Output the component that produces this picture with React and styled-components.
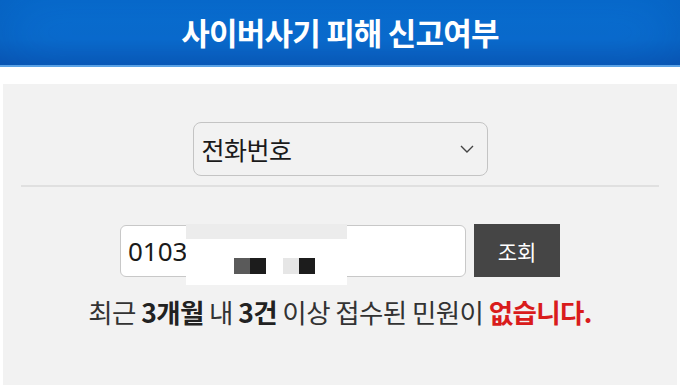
import React from 'react';
import styled, { createGlobalStyle } from 'styled-components';

const GlobalStyle = createGlobalStyle`
    body {
        margin: 0;
        background: #ffffff;
        font-family: "Noto Sans CJK KR", "Noto Sans", sans-serif;
    }
`;

export default function App() {
    return (
        <>
            <GlobalStyle />
            <Page>
                <Header>
                    <Title>사이버사기 피해 신고여부</Title>
                </Header>
                <Panel>
                    <SelectRow>
                        <Select>
                            <span>전화번호</span>
                            <svg width="16" height="10" viewBox="0 0 16 10">
                                <path d="M2 2 L8 8 L14 2" fill="none" stroke="#444" strokeWidth="1.4" />
                            </svg>
                        </Select>
                    </SelectRow>
                    <Divider />
                    <SearchRow>
                        <InputBox>
                            <InputText>0103</InputText>
                            <Censor>
                                <CensorBand />
                                <Pixels>
                                    <Pixel $c="#5a5a5a" />
                                    <Pixel $c="#1c1c1c" />
                                    <PixelGap />
                                    <Pixel $c="#e6e6e6" />
                                    <Pixel $c="#1c1c1c" />
                                </Pixels>
                            </Censor>
                        </InputBox>
                        <Button>조회</Button>
                    </SearchRow>
                    <Message>
                        최근 <b>3개월</b> 내 <b>3건</b> 이상 접수된 민원이 <Red>없습니다.</Red>
                    </Message>
                </Panel>
            </Page>
        </>
    );
}

const Page = styled.div`
    width: 680px;
    height: 385px;
    overflow: hidden;
    display: flex;
    flex-direction: column;
`;

const Header = styled.div`
    height: 65px;
    display: flex;
    align-items: center;
    justify-content: center;
    background: linear-gradient(180deg, #0872d6 0%, #0a6fd2 60%, #0a5fc0 100%);
    border-bottom: 2px solid #5aa2e6;
    box-shadow: inset 0 0 60px rgba(0, 40, 120, 0.25);
`;

const Title = styled.h1`
    margin: 0;
    color: #ffffff;
    font-size: 31px;
    font-weight: 700;
    letter-spacing: -0.8px;
    padding-bottom: 3px;
`;

const Panel = styled.div`
    margin: 17px 3px 0;
    flex: 1;
    background: #f2f2f2;
    display: flex;
    flex-direction: column;
    align-items: stretch;
`;

const SelectRow = styled.div`
    display: flex;
    justify-content: center;
    padding-top: 38px;
`;

const Select = styled.div`
    width: 295px;
    height: 54px;
    box-sizing: border-box;
    border: 1px solid #c4c4c4;
    border-radius: 8px;
    background: #f2f2f2;
    display: flex;
    align-items: center;
    justify-content: space-between;
    padding: 0 12px 0 8px;
    font-size: 25px;
    color: #1a1a1a;
    letter-spacing: -0.5px;
`;

const Divider = styled.div`
    height: 2px;
    background: #e0e0e0;
    margin: 9px 18px 0;
`;

const SearchRow = styled.div`
    display: flex;
    justify-content: center;
    gap: 8px;
    padding-top: 38px;
`;

const InputBox = styled.div`
    position: relative;
    width: 346px;
    height: 52px;
    box-sizing: border-box;
    border: 1px solid #c8c8c8;
    border-radius: 6px;
    background: #ffffff;
    display: flex;
    align-items: center;
    padding-left: 7px;
`;

const InputText = styled.span`
    font-family: "Noto Sans", sans-serif;
    font-size: 26px;
    color: #1a1a1a;
`;

const Censor = styled.div`
    position: absolute;
    left: 65px;
    top: -2px;
    width: 161px;
    height: 61px;
    background: #ffffff;
    display: flex;
    flex-direction: column;
`;

const CensorBand = styled.div`
    height: 15px;
    background: #ececec;
`;

const Pixels = styled.div`
    display: flex;
    margin: 19px 0 0 48px;
`;

const Pixel = styled.div`
    width: 16px;
    height: 16px;
    background: ${p => p.$c};
`;

const PixelGap = styled.div`
    width: 17px;
`;

const Button = styled.div`
    width: 86px;
    height: 53px;
    background: #454545;
    color: #ffffff;
    font-size: 21px;
    display: flex;
    align-items: center;
    justify-content: center;
    margin-top: -1px;
`;

const Message = styled.p`
    margin: 15px 0 0;
    text-align: center;
    font-size: 26.5px;
    color: #333333;
    letter-spacing: -0.6px;

    b {
        font-weight: 700;
        color: #222222;
    }
`;

const Red = styled.b`
    && {
        color: #d91c1c;
    }
`;
